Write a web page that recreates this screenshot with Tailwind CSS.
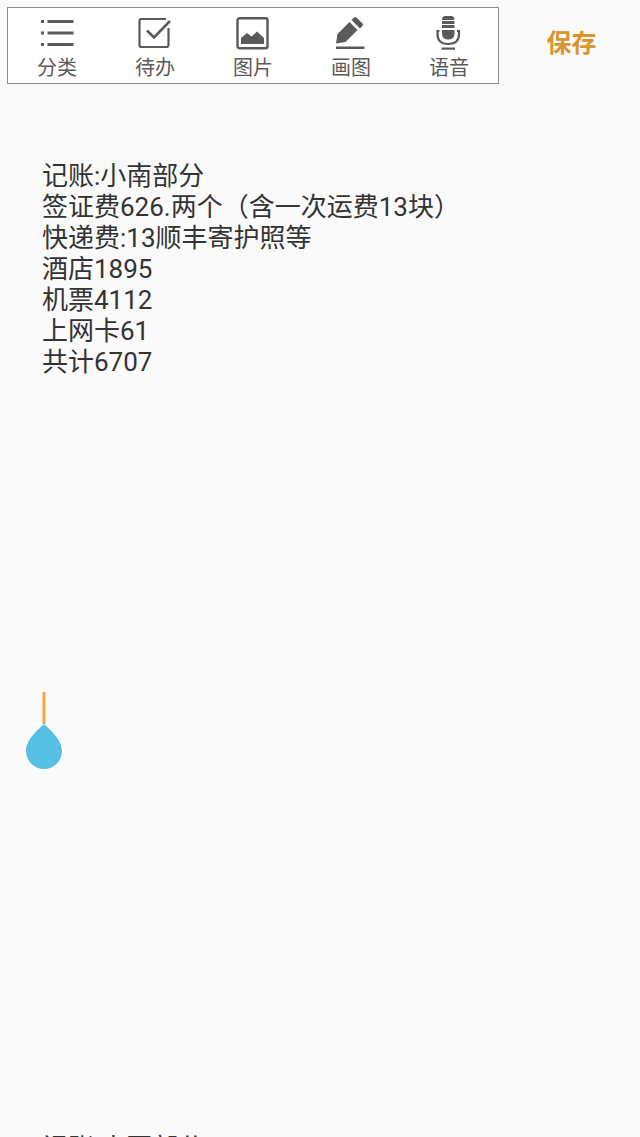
<!DOCTYPE html>
<html lang="zh-CN">
<head>
  <meta charset="UTF-8" />
  <meta name="viewport" content="width=device-width, initial-scale=1.0" />
  <title>编辑便签</title>
  <script src="https://cdn.jsdelivr.net/npm/@tailwindcss/browser@4"></script>
</head>
<body class="h-screen overflow-hidden bg-[#fafafa] font-['Roboto','Noto_Sans_CJK_SC',sans-serif]">

  <!-- Toolbar -->
  <header class="flex items-start pl-[7px] pt-[7px]">
    <nav class="flex h-[77px] flex-[490] justify-around border border-[#8c8c8c] bg-white text-xl leading-6 text-[#5a5a5a]">
      <button type="button" class="flex flex-1 flex-col items-center gap-0.5 pt-2">
        <svg class="h-[38px] w-[38px]" viewBox="0 0 38 38" fill="currentColor">
          <path d="M3 4h3v3H3zM9.500 4h26v3h-26zM3 15.500h3v3H3zM9.500 15.500h26v3h-26zM3 27h3v3H3zM9.500 27h26v3h-26z" />
        </svg>
        <span>分类</span>
      </button>
      <button type="button" class="flex flex-1 flex-col items-center gap-0.5 pt-2">
        <svg class="h-[38px] w-[38px]" viewBox="0 0 38 38" fill="none" stroke="currentColor" stroke-width="2.200">
          <path d="M30 3H5Q3.500 3 3.500 5V29Q3.500 31 5.500 31H30.500Q32.500 31 32.500 29V12" />
          <path d="M11 14.500L18 21.500L34 5" stroke-width="2.600" />
        </svg>
        <span>待办</span>
      </button>
      <button type="button" class="flex flex-1 flex-col items-center gap-0.5 pt-2">
        <svg class="h-[38px] w-[38px]" viewBox="0 0 38 38">
          <rect x="3.500" y="2.200" width="30" height="30" rx="2" fill="none" stroke="currentColor" stroke-width="2.400" />
          <path d="M7 28V22L13 17L17.500 20.500L23 15.500L30 22V28Z" fill="currentColor" />
        </svg>
        <span>图片</span>
      </button>
      <button type="button" class="flex flex-1 flex-col items-center gap-0.5 pt-2">
        <svg class="h-[38px] w-[38px]" viewBox="0 0 38 38" fill="currentColor">
          <path d="M4 27.500L5.500 18L17.500 6L25.500 14L13.500 26Z" />
          <path d="M19.500 4L22 1.500Q23.300 .5 24.500 1.500L30.500 7.500Q31.500 8.700 30.500 10L28 12.500Z" />
          <path d="M4 30.500h28.500v2.500H4z" />
        </svg>
        <span>画图</span>
      </button>
      <button type="button" class="flex flex-1 flex-col items-center gap-0.5 pt-2">
        <svg class="h-[38px] w-[38px]" viewBox="0 0 38 38" fill="currentColor">
          <path d="M12 4Q12 0 15.500 0H21Q24.500 0 24.500 4ZM12 5h12.500v3H12zM12 9h12.500v3H12zM12 14h12.500V17.500Q24.500 23.500 18.250 23.500T12 17.500Z" />
          <path d="M9.500 15H7.500V18Q7.500 28 18.250 28T29 18V15H27" fill="none" stroke="currentColor" stroke-width="2.200" />
          <path d="M11.500 31.500h13.500v2.200H11.500z" />
        </svg>
        <span>语音</span>
      </button>
    </nav>
    <div class="flex h-[73px] flex-[137] items-center justify-center pl-1">
      <button type="button" class="text-[25px] font-bold leading-8 text-[#d9952f]">保存</button>
    </div>
  </header>

  <!-- Note body -->
  <main class="relative pl-[42px] pt-[77px]">
    <textarea aria-label="便签内容" spellcheck="false" class="block h-[972px] w-full resize-none overflow-hidden text-[26px] leading-[31px] text-[#333333] outline-none">记账:小南部分
签证费626.两个（含一次运费13块）
快递费:13顺丰寄护照等
酒店1895
机票4112
上网卡61
共计6707</textarea>
    <textarea aria-label="便签内容续" spellcheck="false" rows="1" class="block w-full resize-none overflow-hidden text-[26px] leading-[31px] text-[#333333] outline-none">记账:小夏部分</textarea>

    <!-- Caret and drag handle -->
    <svg class="absolute left-[26px] top-[608px] h-[77px] w-9" viewBox="0 0 36 77">
      <path d="M16.500 0h3v32h-3z" fill="#e8ab48" />
      <path d="M18 32C23 37 36 47 36 59A18 18 0 0 1 0 59C0 47 13 37 18 32Z" fill="#56bfe4" />
    </svg>
  </main>

</body>
</html>
